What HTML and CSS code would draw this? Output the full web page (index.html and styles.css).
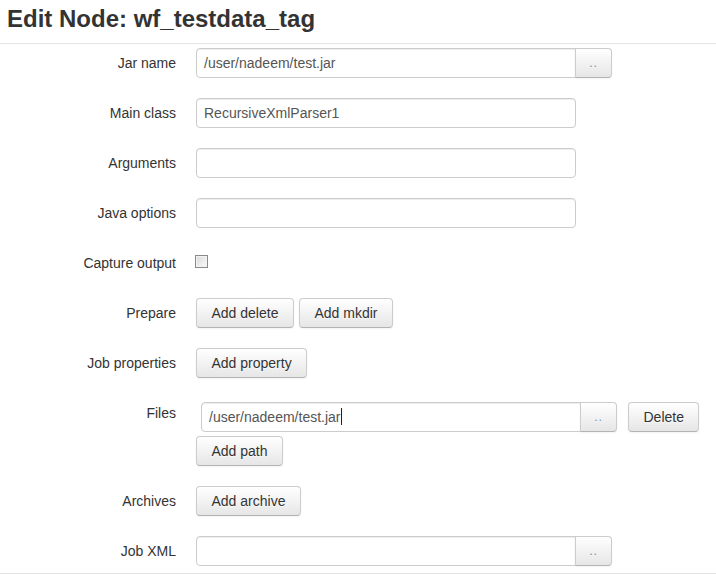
FILE: index.html
```html
<!DOCTYPE html>
<html>
<head>
<meta charset="utf-8">
<title>Edit Node</title>
<link rel="stylesheet" href="styles.css">
</head>
<body>
<div class="header">
  <h2 class="title">Edit Node: wf_testdata_tag</h2>
</div>
<div class="form">
  <div class="label">Jar name</div>
  <div class="control">
    <div class="append">
      <div class="field field-joined">/user/nadeem/test.jar</div>
      <button class="btn btn-dots">..</button>
    </div>
  </div>

  <div class="label">Main class</div>
  <div class="control"><div class="field">RecursiveXmlParser1</div></div>

  <div class="label">Arguments</div>
  <div class="control"><div class="field"></div></div>

  <div class="label">Java options</div>
  <div class="control"><div class="field"></div></div>

  <div class="label">Capture output</div>
  <div class="control"><span class="checkbox"></span></div>

  <div class="label">Prepare</div>
  <div class="control">
    <div class="btn-row">
      <button class="btn">Add delete</button>
      <button class="btn">Add mkdir</button>
    </div>
  </div>

  <div class="label">Job properties</div>
  <div class="control"><button class="btn">Add property</button></div>

  <div class="label">Files</div>
  <div class="control">
    <div class="files-line">
      <div class="append">
        <div class="field field-joined field-files">/user/nadeem/test.jar<span class="caret"></span></div>
        <button class="btn btn-dots">..</button>
      </div>
      <button class="btn btn-delete">Delete</button>
    </div>
    <button class="btn btn-addpath">Add path</button>
  </div>

  <div class="label">Archives</div>
  <div class="control"><button class="btn">Add archive</button></div>

  <div class="label">Job XML</div>
  <div class="control">
    <div class="append">
      <div class="field field-joined"></div>
      <button class="btn btn-dots">..</button>
    </div>
  </div>
</div>
</body>
</html>
```
FILE: styles.css
```css
html, body {
  margin: 0;
  padding: 0;
  background: #fff;
  font-family: "Liberation Sans", Arial, Helvetica, sans-serif;
  font-size: 14px;
  color: #333;
}

.header {
  padding: 0 0 5px 7px;
  border-bottom: 1px solid #e5e5e5;
}

.title {
  margin: 0;
  font-size: 24px;
  line-height: 38px;
  font-weight: bold;
  color: #333;
}

.form {
  display: grid;
  grid-template-columns: 176px 1fr;
  column-gap: 20px;
  row-gap: 20px;
  padding: 4px 0 7px 0;
  border-bottom: 1px solid #e5e5e5;
}

.label {
  text-align: right;
  line-height: 30px;
  height: 30px;
  white-space: nowrap;
}

.control {
  display: flex;
  flex-direction: column;
  align-items: flex-start;
}

.append {
  display: flex;
}

.field {
  box-sizing: border-box;
  width: 380px;
  height: 30px;
  border: 1px solid #ccc;
  border-radius: 4px;
  padding: 0 7px;
  line-height: 28px;
  color: #555;
  background: #fff;
  box-shadow: inset 0 1px 1px rgba(0, 0, 0, 0.075);
  white-space: nowrap;
}

.field-joined {
  border-top-right-radius: 0;
  border-bottom-right-radius: 0;
}

.field-files {
  width: 380px;
}

.caret {
  display: inline-block;
  width: 1px;
  height: 17px;
  background: #222;
  vertical-align: -3px;
}

.btn {
  box-sizing: border-box;
  height: 30px;
  padding: 0 14.5px;
  font-family: inherit;
  font-size: 14px;
  line-height: 28px;
  color: #333;
  text-shadow: 0 1px 1px rgba(255, 255, 255, 0.75);
  background: linear-gradient(#ffffff, #e6e6e6);
  border: 1px solid #ccc;
  border-bottom-color: #b3b3b3;
  border-radius: 4px;
  box-shadow: inset 0 1px 0 rgba(255, 255, 255, 0.2), 0 1px 2px rgba(0, 0, 0, 0.05);
  cursor: pointer;
  white-space: nowrap;
}

.btn-dots {
  width: 37px;
  padding: 0;
  margin-left: -1px;
  border-top-left-radius: 0;
  border-bottom-left-radius: 0;
  font-size: 12px;
  color: #6f8cab;
  letter-spacing: 1px;
}

.btn-row {
  display: flex;
  gap: 5px;
}

.checkbox {
  box-sizing: border-box;
  display: block;
  width: 13px;
  height: 13px;
  margin-top: 7px;
  margin-left: -1px;
  border: 1px solid #8a8a8a;
  background: linear-gradient(135deg, #d9d9d9, #fbfbfb);
  box-shadow: inset 0 0 0 1px #f2f2f2;
}

.files-line {
  display: flex;
  align-items: center;
  margin: 4px 0 0 5px;
}

.btn-delete {
  margin-left: 11px;
}

.btn-addpath {
  margin-top: 4px;
}
```
